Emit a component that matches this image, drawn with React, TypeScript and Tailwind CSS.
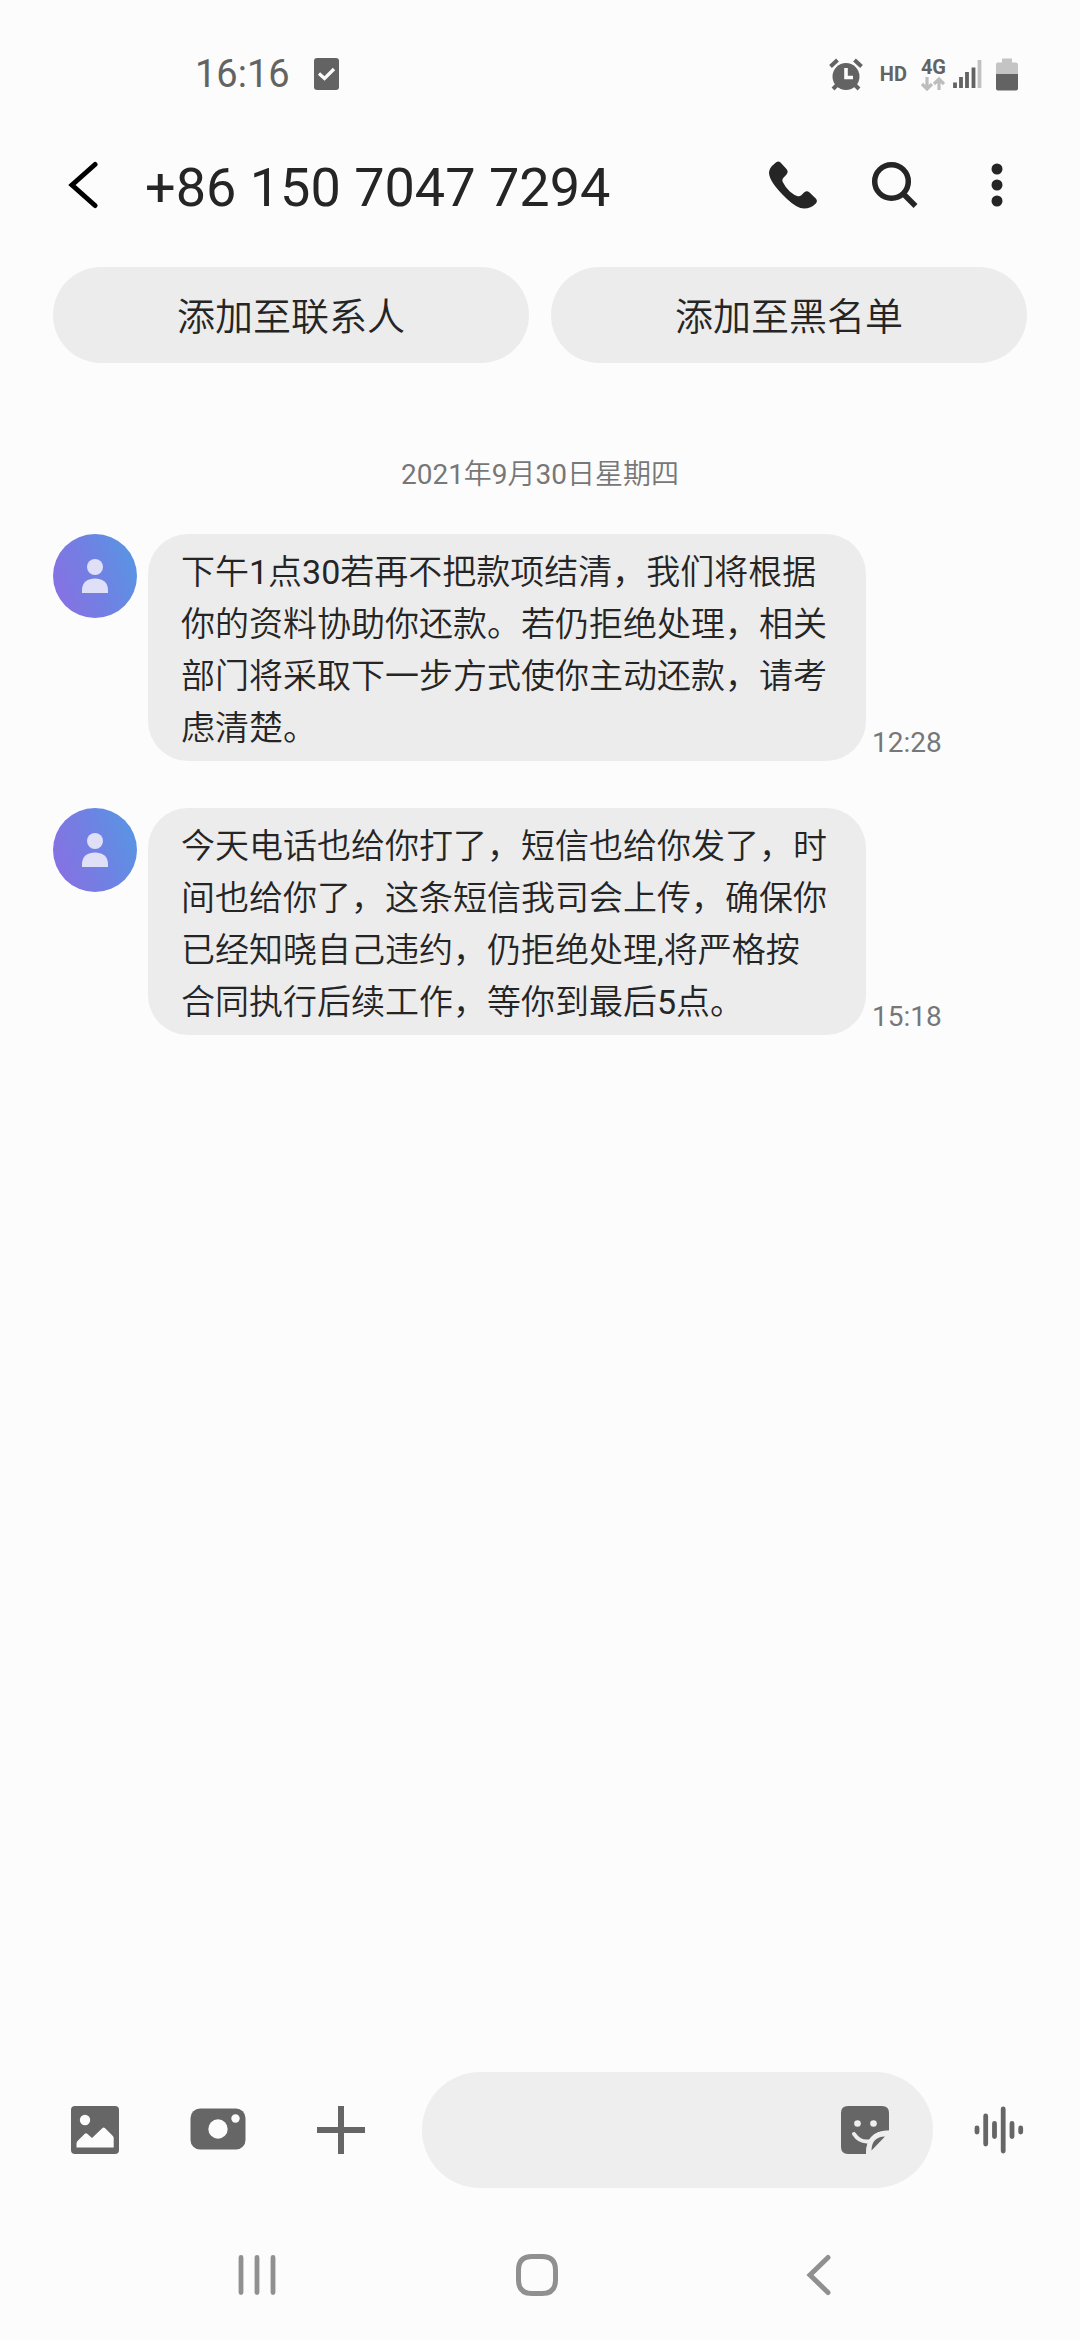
import type { ReactNode } from 'react';

const MESSAGES = [
  {
    id: 1,
    text: '下午1点30若再不把款项结清，我们将根据你的资料协助你还款。若仍拒绝处理，相关部门将采取下一步方式使你主动还款，请考虑清楚。',
    time: '12:28',
  },
  {
    id: 2,
    text: '今天电话也给你打了，短信也给你发了，时间也给你了，这条短信我司会上传，确保你已经知晓自己违约，仍拒绝处理,将严格按合同执行后续工作，等你到最后5点。',
    time: '15:18',
  },
];

const QUICK_ACTIONS = ['添加至联系人', '添加至黑名单'];

function StatusBar() {
  return (
    <div className="flex h-[148px] items-center pl-[195px] pr-[62px] text-[#636363]">
      <span className="text-[38px] leading-[48px]">16:16</span>
      <svg className="ml-6 h-8 w-[25px]" viewBox="0 0 25 32">
        <rect width="25" height="32" rx="3" fill="currentColor" />
        <path d="M5 15.5l5.5 5L20 11" fill="none" stroke="#fcfcfc" strokeWidth="3.2" />
      </svg>

      <svg className="ml-auto h-[34px] w-9" viewBox="0 0 36 34">
        <circle cx="18" cy="19.5" r="13.5" fill="currentColor" />
        <path d="M2.5 9.5l7-6.5M33.5 9.5l-7-6.5" stroke="currentColor" strokeWidth="4" />
        <path d="M5 32l5-5M31 32l-5-5" stroke="currentColor" strokeWidth="4" />
        <path d="M18 11v9.5h7" fill="none" stroke="#fcfcfc" strokeWidth="3.6" />
      </svg>
      <span className="ml-4 text-[20px] font-bold leading-6">HD</span>
      <div className="ml-[14px] flex flex-col items-center">
        <span className="text-[20px] font-bold leading-5">4G</span>
        <svg className="h-[14px] w-6" viewBox="0 0 24 14" fill="none" stroke="#bdbdbd" strokeWidth="3.2">
          <path d="M6 0v12M1 7l5 5 5-5M18 13V2M13 7l5-5 5 5" />
        </svg>
      </div>
      <svg className="ml-[6px] h-[30px] w-[30px]" viewBox="0 0 30 30" strokeWidth="3.8" stroke="currentColor">
        <path d="M3 23.5V29M9 18v11M15 13v16M21.5 8.500v20.5" />
        <path d="M27.500 1v28" stroke="#c2c2c2" />
      </svg>
      <svg className="ml-[14px] h-[34px] w-[22px]" viewBox="0 0 22 34">
        <path d="M6 1.500h10v4h4q2 0 2 2V17H0V7.500q0-2 2-2h4z" fill="#c4c4c4" />
        <path d="M0 17h22v14.500q0 2-2 2H2q-2 0-2-2z" fill="currentColor" />
      </svg>
    </div>
  );
}

function IconButton({ label, className, children }: { label: string; className: string; children: ReactNode }) {
  return (
    <button type="button" aria-label={label} className={`flex shrink-0 items-center justify-center ${className}`}>
      {children}
    </button>
  );
}

function Header() {
  return (
    <header className="flex h-[74px] items-center pl-[53px] pr-[59px] text-[#252525]">
      <IconButton label="返回" className="h-16 w-[60px] text-black">
        <svg className="h-12 w-8" viewBox="0 0 32 48" fill="none" stroke="currentColor" strokeWidth="5" strokeLinecap="round">
          <path d="M28 3.500L5 24l23 20.500" strokeLinejoin="miter" />
        </svg>
      </IconButton>
      <h1 className="ml-8 flex-1 whitespace-nowrap pt-[5px] text-[54px] leading-[64px]">+86 150 7047 7294</h1>
      <IconButton label="拨打电话" className="h-16 w-16">
        <svg className="h-12 w-12" viewBox="0 0 48 48" fill="currentColor">
          <path d="M6 2.200Q8.800-.800 11.500 1.500L17.500 8q2.300 2.800 0 5.500L14.200 17q-1.400 1.600-.4 4 2.600 5.500 7 9.500 4.300 3.800 8 4.700 2 .4 3.500-1l3-3q2.500-2 5 0l6.500 6.300q2.200 2.500 0 5Q42 47.500 35 47.500q-7 0-17-9.500Q0 21 0 11.500 0 7 6 2.200z" />
        </svg>
      </IconButton>
      <IconButton label="搜索" className="ml-[38px] h-16 w-16">
        <svg className="h-12 w-12" viewBox="0 0 48 48" fill="none" stroke="currentColor">
          <circle cx="20.500" cy="20.500" r="16.800" strokeWidth="5.500" />
          <path d="M32.500 33l12 12" strokeWidth="5.500" />
        </svg>
      </IconButton>
      <IconButton label="更多选项" className="ml-[46px] h-16 w-12">
        <svg className="h-12 w-3" viewBox="0 0 12 48" fill="currentColor">
          <circle cx="6" cy="8" r="5.500" />
          <circle cx="6" cy="24" r="5.500" />
          <circle cx="6" cy="40" r="5.500" />
        </svg>
      </IconButton>
    </header>
  );
}

function Avatar() {
  return (
    <div className="flex h-[84px] w-[84px] shrink-0 items-center justify-center rounded-full bg-linear-[70deg,#8b6ee2,#7180e3_50%,#5399e4]">
      <svg className="h-9 w-7" viewBox="0 0 28 36" fill="#dfdff8">
        <circle cx="14" cy="9" r="8" />
        <path d="M1 35v-3C1 24 7 20.500 14 20.500S27 24 27 32v3z" />
      </svg>
    </div>
  );
}

function Message({ text, time }: { text: string; time: string }) {
  return (
    <li className="flex items-start">
      <Avatar />
      <p className="ml-[11px] max-w-[718px] rounded-[40px] bg-[#ececec] px-[33px] pb-[7px] pt-3 text-[34px] leading-[52px] text-[#252525]">
        {text}
      </p>
      <time className="ml-[6px] self-end text-[28px] leading-9 text-[#777777]">{time}</time>
    </li>
  );
}

function Composer() {
  return (
    <form className="flex items-center pl-[67px] pr-[53px] text-[#666666]">
      <IconButton label="图库" className="h-14 w-14">
        <svg className="h-12 w-12" viewBox="0 0 48 48">
          <rect width="48" height="48" rx="4" fill="currentColor" />
          <circle cx="14" cy="14" r="5.200" fill="#fcfcfc" />
          <path d="M5.500 41.500v-4q0-1.500 1-2.500l7-7q1.500-1.300 3 0l4.500 4L31.500 22q1.200-1 2.400 0l8 8q.8 1 .8 2v9.500z" fill="#fcfcfc" />
        </svg>
      </IconButton>
      <IconButton label="相机" className="ml-[67px] h-14 w-14">
        <svg className="h-12 w-14" viewBox="0 0 56 48">
          <rect x=".5" y="2.500" width="55" height="41" rx="9.500" fill="currentColor" />
          <circle cx="28" cy="23" r="9.700" fill="#fcfcfc" />
          <circle cx="45.500" cy="12.500" r="4.200" fill="#fcfcfc" />
        </svg>
      </IconButton>
      <IconButton label="添加附件" className="ml-[67px] h-14 w-14">
        <svg className="h-12 w-12" viewBox="0 0 48 48" stroke="currentColor" strokeWidth="6">
          <path d="M24 0v48M0 24h48" />
        </svg>
      </IconButton>
      <div className="ml-[53px] flex h-[116px] min-w-0 flex-1 items-center rounded-full bg-[#eeeeee] pl-12 pr-10">
        <input type="text" aria-label="短信内容" className="h-full min-w-0 flex-1 bg-transparent text-[34px] text-[#252525] outline-none" />
        <IconButton label="表情贴纸" className="h-14 w-14">
          <svg className="h-12 w-12" viewBox="0 0 48 48">
            <path d="M7 0h34q7 0 7 7v17.500C34 24.500 25.500 31 25 48H7q-7 0-7-7V7q0-7 7-7z" fill="currentColor" />
            <circle cx="16.500" cy="17.500" r="3.300" fill="#eeeeee" />
            <circle cx="32.500" cy="17.500" r="3.300" fill="#eeeeee" />
            <path d="M13 28q5 7.500 12.500 7.500 2.500 0 5-1" fill="none" stroke="#eeeeee" strokeWidth="4" strokeLinecap="round" />
            <path d="M27.500 48c-.5-13 5-21 20.500-21" fill="none" stroke="#eeeeee" strokeWidth="4.500" />
            <path d="M30.500 44.500C30.500 36 35 30.500 44 30.500z" fill="currentColor" />
          </svg>
        </IconButton>
      </div>
      <IconButton label="语音输入" className="ml-[38px] h-14 w-14">
        <svg className="h-12 w-[50px]" viewBox="0 0 50 48" stroke="currentColor" strokeWidth="4.800" strokeLinecap="round">
          <path d="M3 22v4M11.700 10v28M20.500 17.500v13M29.200 3v42M38 17.500v13M46.700 22v4" />
        </svg>
      </IconButton>
    </form>
  );
}

function NavigationBar() {
  return (
    <nav className="mt-[22px] flex h-[130px] items-center justify-between pl-[236px] pr-[242px] text-[#909090]">
      <IconButton label="最近任务" className="h-14 w-[42px]">
        <svg className="h-[42px] w-[42px]" viewBox="0 0 42 42" stroke="currentColor" strokeWidth="4.800" strokeLinecap="round">
          <path d="M5 3.500v35M21 3.500v35M37 3.500v35" />
        </svg>
      </IconButton>
      <IconButton label="主屏幕" className="h-14 w-[42px]">
        <svg className="h-[42px] w-[42px]" viewBox="0 0 42 42" fill="none" stroke="currentColor" strokeWidth="5">
          <path d="M16 2.500h10Q39.500 2.500 39.500 16v10Q39.500 39.500 26 39.500H16Q2.500 39.500 2.500 26V16Q2.500 2.500 16 2.500z" />
        </svg>
      </IconButton>
      <IconButton label="后退" className="h-14 w-[42px]">
        <svg className="h-[42px] w-[42px]" viewBox="0 0 42 42" fill="none" stroke="currentColor" strokeWidth="5" strokeLinecap="round">
          <path d="M32 3.500L14 21l18 17.500" />
        </svg>
      </IconButton>
    </nav>
  );
}

export default function App() {
  return (
    <div
      lang="zh-CN"
      className="flex min-h-screen flex-col bg-[#fcfcfc] font-[Roboto,'Noto_Sans_CJK_SC_DemiLight','Noto_Sans_CJK_SC',sans-serif]"
    >
      <StatusBar />
      <Header />

      <div className="mt-[45px] grid grid-cols-2 gap-[22px] px-[53px]">
        {QUICK_ACTIONS.map((label) => (
          <button key={label} type="button" className="h-24 rounded-full bg-[#ececec] pt-1 text-[38px] font-[350] leading-[56px] text-[#252525]">
            {label}
          </button>
        ))}
      </div>

      <main className="flex-1 px-[53px] pb-12 pt-[92px]">
        <h2 className="text-center text-[28px] leading-10 text-[#777777]">2021年9月30日星期四</h2>
        <ul className="mt-[39px] flex flex-col gap-[47px]">
          {MESSAGES.map((message) => (
            <Message key={message.id} text={message.text} time={message.time} />
          ))}
        </ul>
      </main>

      <Composer />
      <NavigationBar />
    </div>
  );
}
